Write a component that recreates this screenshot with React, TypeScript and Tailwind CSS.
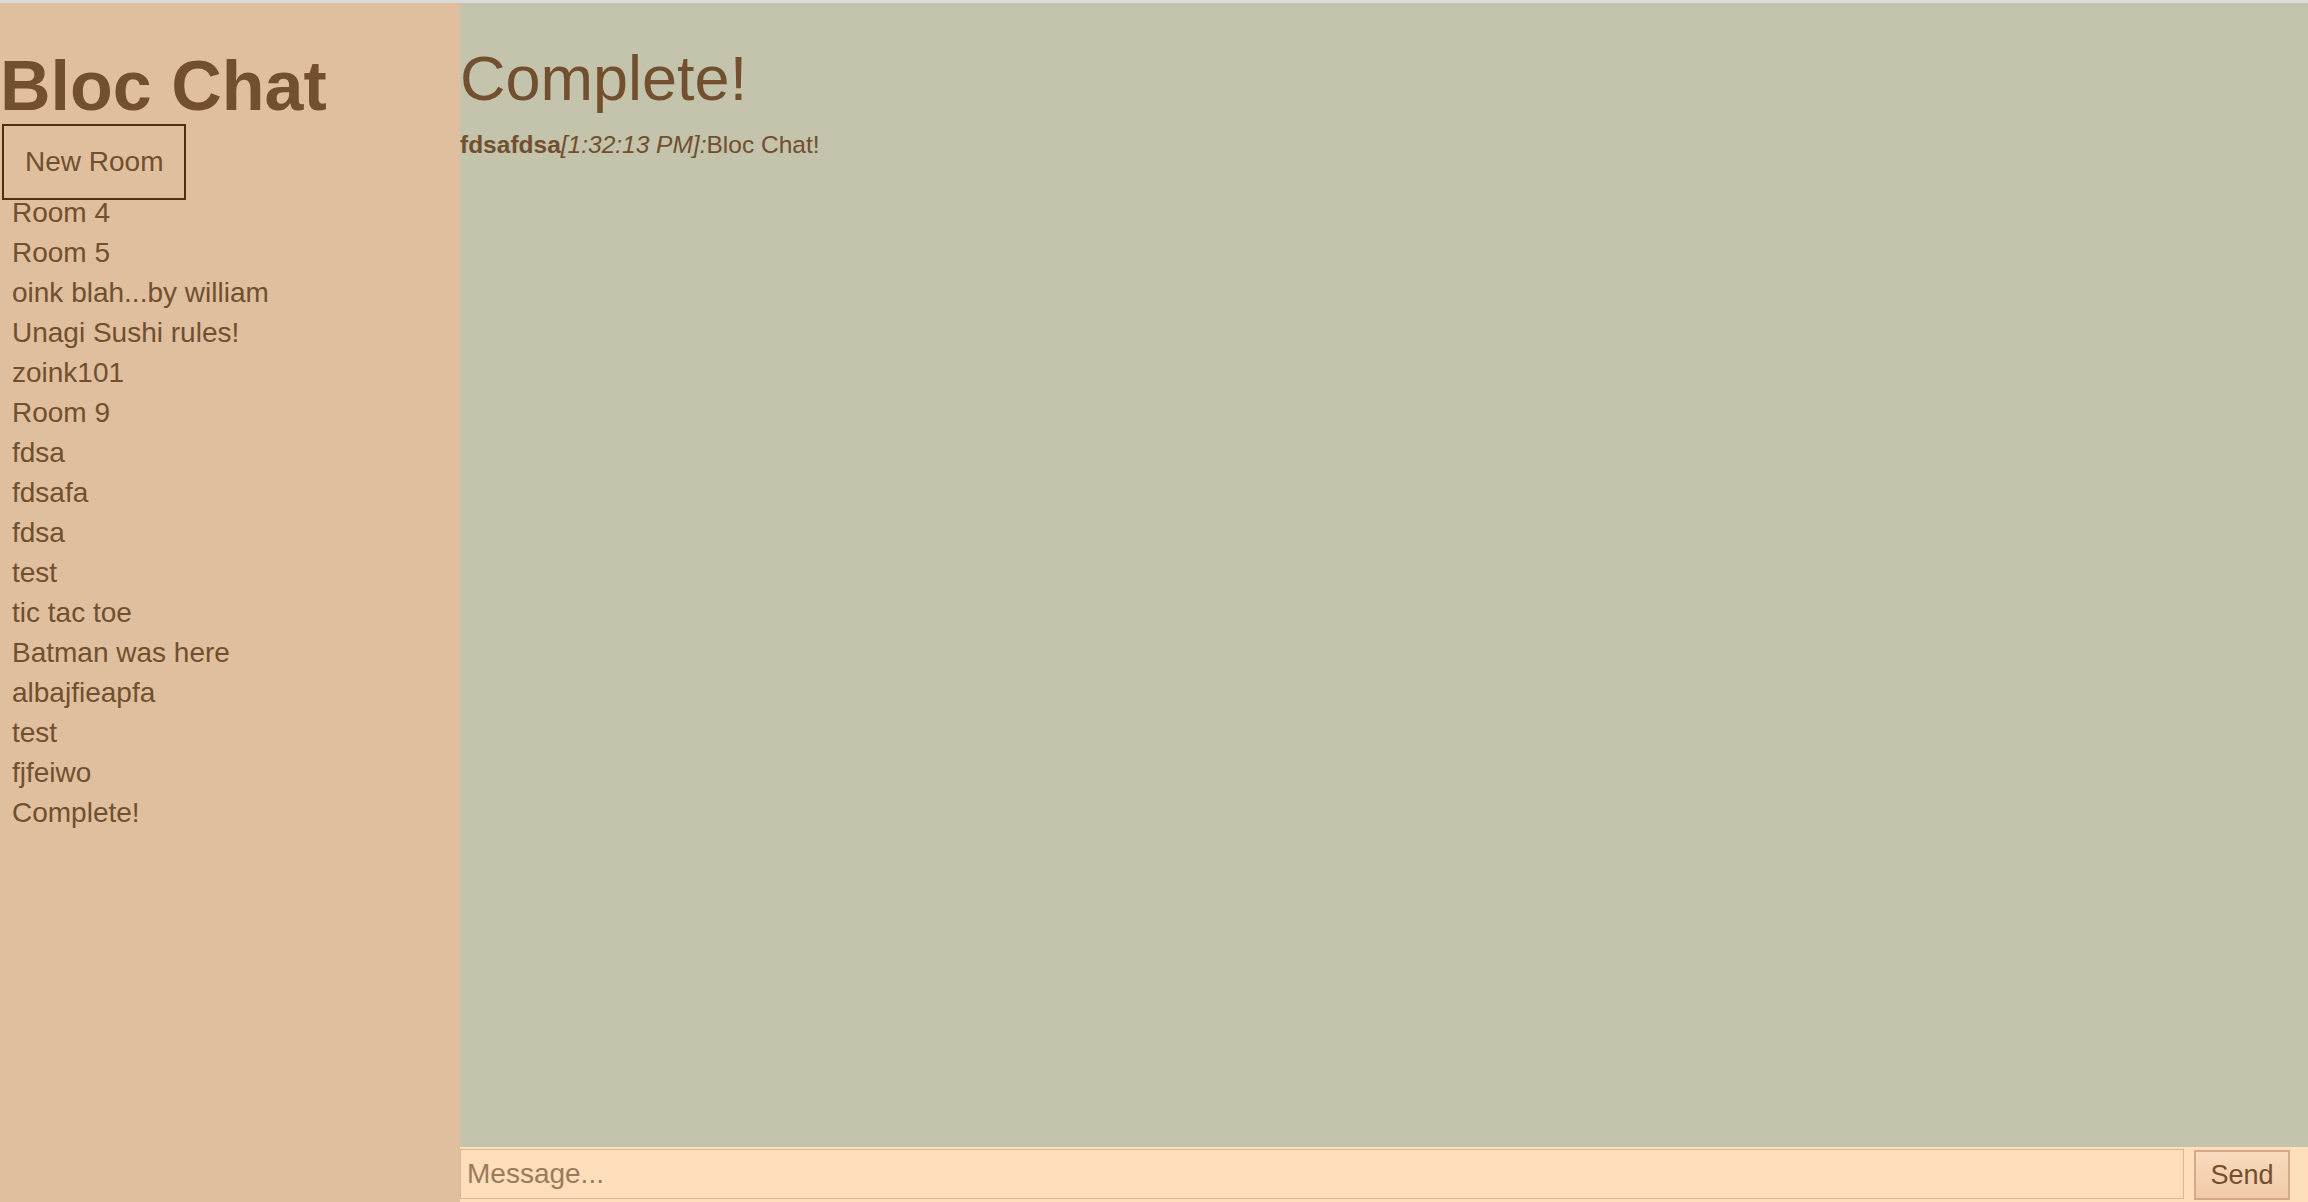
import { useState } from 'react';

const ROOMS = [
  'Room 4',
  'Room 5',
  'oink blah...by william',
  'Unagi Sushi rules!',
  'zoink101',
  'Room 9',
  'fdsa',
  'fdsafa',
  'fdsa',
  'test',
  'tic tac toe',
  'Batman was here',
  'albajfieapfa',
  'test',
  'fjfeiwo',
  'Complete!',
];

export default function App() {
  const [message, setMessage] = useState('');

  return (
    <div className="flex flex-col h-[1202px] font-['Liberation_Sans',Arial,sans-serif] text-[#714f2f]">
      <div className="h-[3px] bg-[#dcdcdc]" />
      <div className="flex flex-1 min-h-0">
        <aside className="w-[460px] shrink-0 bg-[#e0bf9f]">
          <h1 className="mt-[47px] text-[70px] leading-[72px] font-bold">Bloc Chat</h1>
          <button className="mt-[2px] ml-[2px] h-[76px] px-[21px] border-2 border-[#4f2f10] text-[28px] leading-none">
            New Room
          </button>
          <ul className="flex flex-col gap-[14px] pl-[12px]">
            {ROOMS.map((room, i) => (
              <li key={i} className="text-[28px] leading-[26px] cursor-pointer">
                {room}
              </li>
            ))}
          </ul>
        </aside>

        <main className="flex-1 flex flex-col bg-[#c4c3ab]">
          <div className="flex-1">
            <h2 className="mt-[43px] text-[63px] leading-[64px]">Complete!</h2>
            <p className="mt-[21px] text-[24.5px] leading-[28px]">
              <span className="font-bold">fdsafdsa</span>
              <span className="italic">[1:32:13 PM]:</span>
              <span>Bloc Chat!</span>
            </p>
          </div>
          <form
            className="flex items-start h-[55px] pt-[2px] bg-[#ffdebc]"
            onSubmit={(e) => {
              e.preventDefault();
              setMessage('');
            }}
          >
            <input
              value={message}
              onChange={(e) => setMessage(e.target.value)}
              placeholder="Message..."
              className="w-[1724px] h-[50px] px-[6px] border border-[#dcb594] bg-[#ffdebc] text-[28px] placeholder:text-[#9b7a5a] outline-none"
            />
            <button
              type="submit"
              className="ml-[10px] mt-[1px] w-[96px] h-[50px] border-2 border-[#d2aa88] bg-gradient-to-b from-[#f9dbbd] to-[#f1caa8] text-[27px] leading-none"
            >
              Send
            </button>
          </form>
        </main>
      </div>
    </div>
  );
}
